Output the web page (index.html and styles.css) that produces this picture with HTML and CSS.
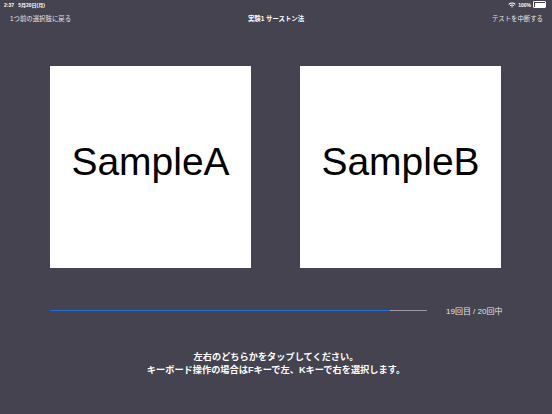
FILE: index.html
```html
<!DOCTYPE html>
<html lang="ja">
<head>
    <meta charset="utf-8">
    <title>実験1 サーストン法</title>
    <link rel="stylesheet" href="styles.css">
</head>
<body>
    <div class="status-bar">
        <span class="status-time">2:37&nbsp;&nbsp;&nbsp;5月20日(月)</span>
        <span class="status-right">
            <svg class="wifi" width="8" height="6" viewBox="0 0 8 6">
                <path d="M0.3 2 A5.5 5.5 0 0 1 7.7 2 L7 2.8 A4.5 4.5 0 0 0 1 2.8 Z" fill="#fff"/>
                <path d="M1.7 3.4 A3.5 3.5 0 0 1 6.3 3.4 L5.6 4.1 A2.5 2.5 0 0 0 2.4 4.1 Z" fill="#fff"/>
                <path d="M3.1 4.7 A1.4 1.4 0 0 1 4.9 4.7 L4 5.8 Z" fill="#fff"/>
            </svg>
            100%
            <span class="battery"><span class="battery-fill"></span></span>
        </span>
    </div>

    <div class="nav-bar">
        <a class="nav-back">1つ前の選択肢に戻る</a>
        <span class="nav-title">実験1 サーストン法</span>
        <a class="nav-action">テストを中断する</a>
    </div>

    <div class="choices">
        <div class="choice">SampleA</div>
        <div class="choice">SampleB</div>
    </div>

    <div class="progress-row">
        <div class="progress-track">
            <div class="progress-fill" style="width: 90.2%"></div>
        </div>
        <span class="progress-label">19回目 / 20回中</span>
    </div>

    <div class="instructions">
        左右のどちらかをタップしてください。<br>
        キーボード操作の場合はFキーで左、Kキーで右を選択します。
    </div>
</body>
</html>
```

FILE: styles.css
```css
html, body { margin: 0; padding: 0; }
body {
    width: 552px;
    height: 414px;
    background: #44434f;
    color: #fff;
    font-family: "Helvetica Neue", "Liberation Sans", "Noto Sans CJK JP", sans-serif;
    overflow: hidden;
}

.status-bar { display: flex; justify-content: space-between; align-items: center; height: 9px; padding: 0 6px 0 4px; font-size: 5px; font-weight: bold; }
.status-right { display: flex; align-items: center; gap: 2px; }
.battery { display: inline-block; width: 10px; height: 4px; border: 0.5px solid #fff; border-radius: 1px; padding: 0.5px; }
.battery-fill { display: block; width: 100%; height: 100%; background: #fff; }

.nav-bar { position: relative; display: flex; justify-content: space-between; align-items: center; height: 18px; padding: 0 9px 0 10px; font-size: 6.4px; color: #e6e6ea; }
.nav-title { position: absolute; left: 0; right: 0; text-align: center; font-weight: bold; color: #fff; pointer-events: none; }

.choices { display: flex; gap: 49px; padding: 39px 0 0 50px; }
.choice {
    box-sizing: border-box;
    width: 201px;
    height: 202px;
    padding-bottom: 10px;
    background: #fff;
    color: #000;
    display: flex;
    align-items: center;
    justify-content: center;
    font-family: "Liberation Sans", Arial, sans-serif;
    font-size: 39px;
}

.progress-row { display: flex; align-items: center; margin: 37px 0 0 50px; }
.progress-track { width: 377px; height: 1.5px; background: #9c9ba3; }
.progress-fill { height: 100%; background: #1e6fd9; }
.progress-label { margin-left: 19px; font-size: 8px; color: #e6e6ea; }

.instructions { margin-top: 35px; text-align: center; font-size: 9.2px; font-weight: bold; line-height: 13px; }
```
